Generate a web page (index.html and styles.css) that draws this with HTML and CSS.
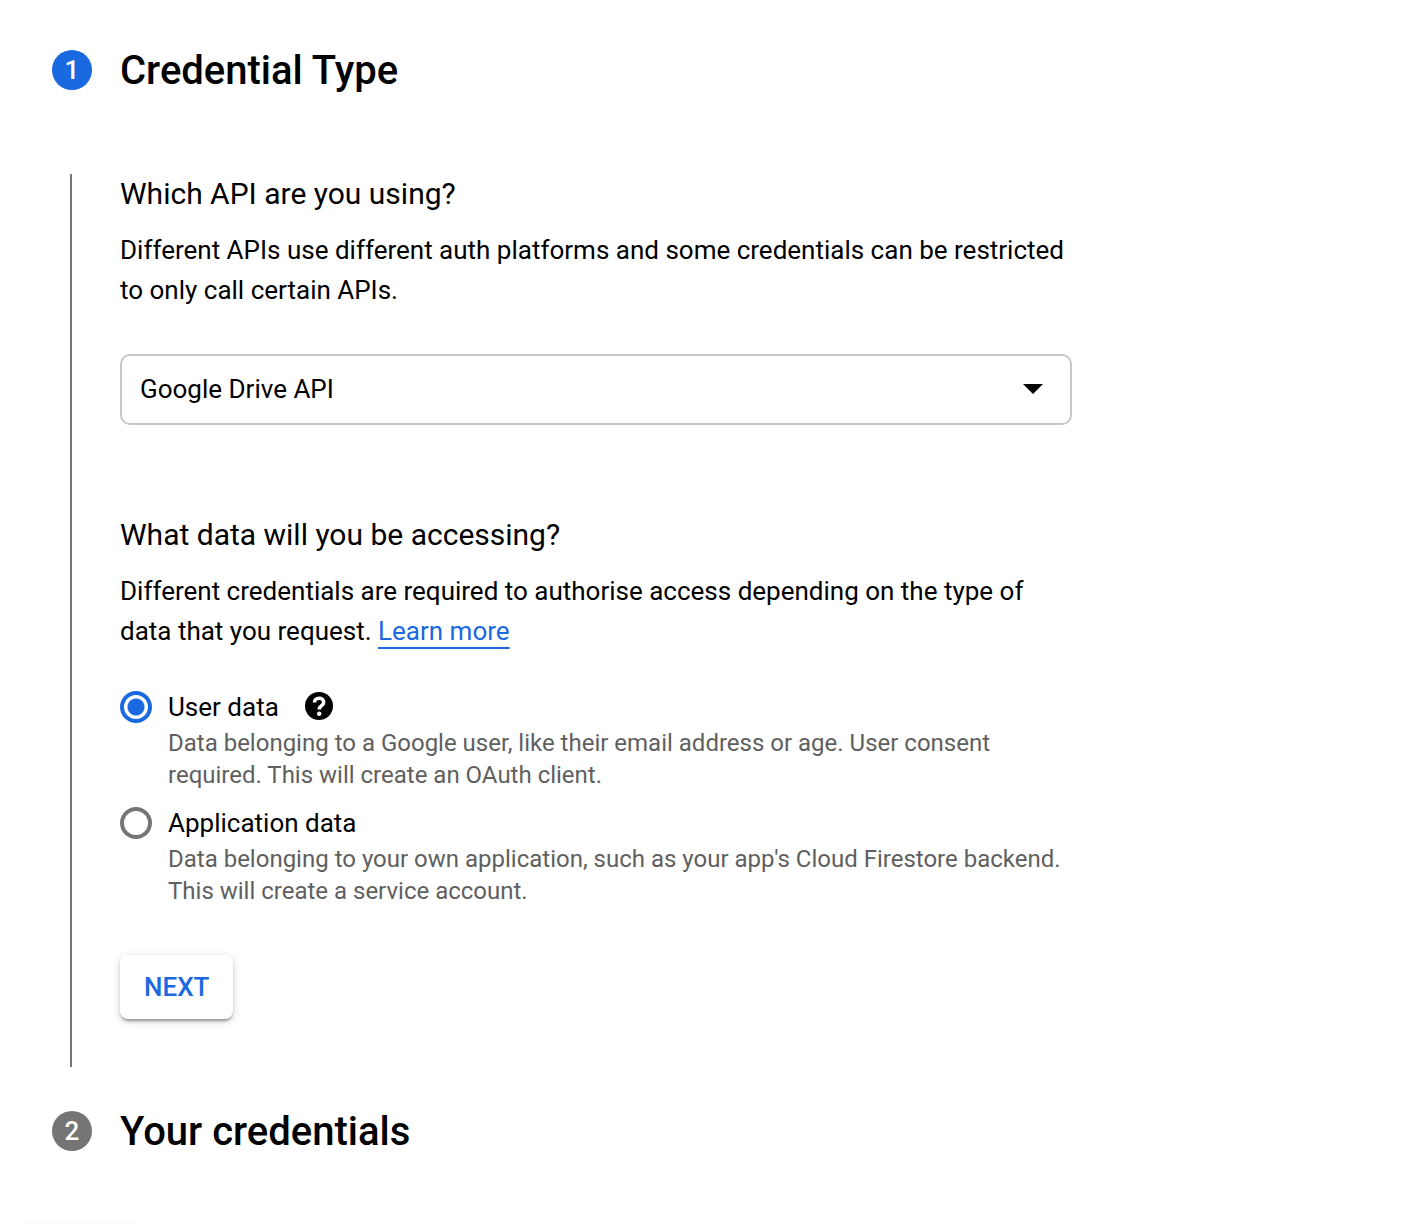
FILE: index.html
```html
<!DOCTYPE html>
<html lang="en-GB">
<head>
<meta charset="utf-8">
<meta name="viewport" content="width=device-width, initial-scale=1">
<title>Create credentials</title>
<link rel="stylesheet" href="styles.css">
</head>
<body>
<main class="stepper">
  <section class="step">
    <header class="step-header">
      <span class="step-number step-number-active">1</span>
      <h1 class="step-title">Credential Type</h1>
    </header>
    <form class="step-content">
      <section class="question">
        <h2 class="question-title" id="api-title">Which API are you using?</h2>
        <p class="question-text">Different APIs use different auth platforms and some credentials can be restricted to only call certain APIs.</p>
        <div class="select-field">
          <select class="select" aria-labelledby="api-title">
            <option>Google Drive API</option>
          </select>
          <svg class="select-arrow" viewBox="0 0 20 10" aria-hidden="true"><path d="M0 0h20L10 10z"/></svg>
        </div>
      </section>
      <section class="question">
        <h2 class="question-title">What data will you be accessing?</h2>
        <p class="question-text">Different credentials are required to authorise access depending on the type of data that you request. <a class="link" href="#">Learn more</a></p>
        <div class="options">
          <div class="option">
            <input class="radio" type="radio" name="data" id="user-data" checked>
            <div class="option-body">
              <div class="option-heading">
                <label class="option-label" for="user-data">User data</label>
                <svg class="help" viewBox="0 0 28 28" role="img" aria-label="Help"><circle cx="14" cy="14" r="14"/><path class="help-mark" d="M9.500 10.500C9.500 7.800 11.500 6.300 14.100 6.300s4.600 1.500 4.600 4c0 3.400-4.500 3.400-4.500 7.200"/><circle class="help-dot" cx="14.200" cy="21.700" r="2.200"/></svg>
              </div>
              <p class="option-text">Data belonging to a Google user, like their email address or age. User consent required. This will create an OAuth client.</p>
            </div>
          </div>
          <div class="option">
            <input class="radio" type="radio" name="data" id="app-data">
            <div class="option-body">
              <div class="option-heading">
                <label class="option-label" for="app-data">Application data</label>
              </div>
              <p class="option-text">Data belonging to your own application, such as your app's Cloud Firestore backend. This will create a service account.</p>
            </div>
          </div>
        </div>
      </section>
      <button class="next" type="button">NEXT</button>
    </form>
  </section>
  <section class="step">
    <header class="step-header">
      <span class="step-number">2</span>
      <h1 class="step-title">Your credentials</h1>
    </header>
  </section>
</main>
<div class="page-actions"></div>
</body>
</html>
```
FILE: styles.css
```css
* { box-sizing: border-box; }

:root {
  --blue: #1a69e0;
  --grey: #757575;
}

body {
  margin: 0;
  background: #fff;
  color: #000;
  font-family: Roboto, "Liberation Sans", sans-serif;
  font-size: 26px;
  line-height: 40px;
}

h1, h2, p { margin: 0; }

.stepper { padding: 45px 52px 0; }

.step-header {
  display: flex;
  align-items: center;
  gap: 28px;
}

.step-number {
  width: 40px;
  height: 40px;
  border-radius: 50%;
  background: var(--grey);
  color: #fff;
  font-size: 26px;
  font-weight: 500;
  text-align: center;
}

.step-number-active { background: var(--blue); }

.step-title {
  padding-top: 2px;
  font-size: 40px;
  line-height: 48px;
  font-weight: 500;
}

.step-content {
  max-width: 1002px;
  margin: 79px 0 39px 18px;
  padding: 0 0 48px 48px;
  border-left: 2px solid var(--grey);
}

.question-title {
  margin-bottom: 16px;
  font-size: 30px;
  font-weight: 400;
}

.select-field {
  display: grid;
  align-items: center;
  margin: 44px 0 90px;
}

.select,
.select-arrow { grid-area: 1 / 1; }

.select {
  appearance: none;
  width: 100%;
  height: 71px;
  padding: 0 18px 2px;
  border: 2px solid #c8c8c8;
  border-radius: 10px;
  background: #fff;
  color: inherit;
  font: inherit;
}

.select-arrow {
  justify-self: end;
  width: 20px;
  height: 10px;
  margin: 0 29px 2px 0;
  pointer-events: none;
}

.link {
  color: var(--blue);
  text-decoration: underline 2px;
  text-decoration-skip-ink: none;
  text-underline-offset: 7px;
}

.options {
  display: grid;
  gap: 12px;
  margin: 36px 0 48px;
}

.option {
  display: flex;
  gap: 16px;
}

.radio {
  appearance: none;
  flex: none;
  width: 32px;
  height: 32px;
  margin: 4px 0 0;
  border: 4px solid var(--grey);
  border-radius: 50%;
}

.radio:checked {
  border-color: var(--blue);
  background: radial-gradient(circle, var(--blue) 8px, #fff 9px);
}

.option-heading {
  display: flex;
  align-items: center;
  gap: 26px;
}

.help {
  width: 28px;
  height: 28px;
  margin-bottom: 2px;
}

.help-mark {
  fill: none;
  stroke: #fff;
  stroke-width: 3.6;
}

.help-dot { fill: #fff; }

.option-text {
  color: #5f5f5f;
  font-size: 24px;
  line-height: 32px;
}

.next {
  display: block;
  height: 64px;
  padding: 0 24px;
  border: 0;
  border-radius: 8px;
  background: #fff;
  box-shadow: 0 3px 3px -1px rgba(0, 0, 0, .35), 0 2px 8px rgba(0, 0, 0, .18);
  color: var(--blue);
  font: inherit;
  font-weight: 500;
}

.page-actions {
  width: 114px;
  height: 1px;
  margin: 67px 0 0 24px;
  background: #f9f9f9;
  box-shadow: 0 0 6px rgba(0, 0, 0, .1);
}
```
